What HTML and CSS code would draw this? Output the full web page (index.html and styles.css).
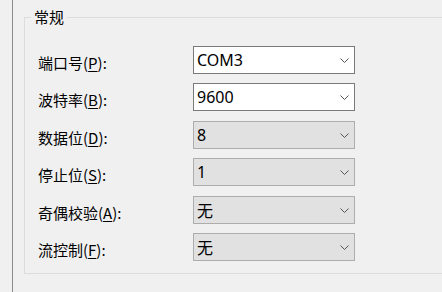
FILE: index.html
```html
<!DOCTYPE html>
<html lang="zh-CN">
<head>
    <meta charset="UTF-8">
    <title>串口设置</title>
    <link rel="stylesheet" href="styles.css">
</head>
<body>
    <div class="page">
        <fieldset class="group">
            <legend>常规</legend>
            <div class="rows">
                <label class="label">端口号(<u>P</u>):</label>
                <div class="combo edit"><span>COM3</span><svg class="arrow" width="9" height="5" viewBox="0 0 9 5"><polyline points="0.5,0.5 4.5,4.5 8.5,0.5"/></svg></div>

                <label class="label">波特率(<u>B</u>):</label>
                <div class="combo edit"><span>9600</span><svg class="arrow" width="9" height="5" viewBox="0 0 9 5"><polyline points="0.5,0.5 4.5,4.5 8.5,0.5"/></svg></div>

                <label class="label">数据位(<u>D</u>):</label>
                <div class="combo"><span>8</span><svg class="arrow" width="9" height="5" viewBox="0 0 9 5"><polyline points="0.5,0.5 4.5,4.5 8.5,0.5"/></svg></div>

                <label class="label">停止位(<u>S</u>):</label>
                <div class="combo"><span>1</span><svg class="arrow" width="9" height="5" viewBox="0 0 9 5"><polyline points="0.5,0.5 4.5,4.5 8.5,0.5"/></svg></div>

                <label class="label">奇偶校验(<u>A</u>):</label>
                <div class="combo"><span>无</span><svg class="arrow" width="9" height="5" viewBox="0 0 9 5"><polyline points="0.5,0.5 4.5,4.5 8.5,0.5"/></svg></div>

                <label class="label">流控制(<u>F</u>):</label>
                <div class="combo"><span>无</span><svg class="arrow" width="9" height="5" viewBox="0 0 9 5"><polyline points="0.5,0.5 4.5,4.5 8.5,0.5"/></svg></div>
            </div>
        </fieldset>
    </div>
</body>
</html>
```

FILE: styles.css
```css
html, body {
    margin: 0;
    height: 100%;
    overflow: hidden;
}
body {
    background: #f0f0f0;
    color: #000;
    font-family: "Noto Sans", "Noto Sans CJK SC", sans-serif;
    font-size: 15px;
}
.page {
    margin-left: 12px;
    height: 100%;
    border-left: 1px solid #8c8c8c;
    padding: 7px 0 0 11px;
    box-sizing: border-box;
}
.group {
    height: 267px;
    box-sizing: border-box;
    margin: 0;
    padding: 0;
    border: 1px solid #dcdcdc;
    border-right: none;
}
.group legend {
    margin-left: 6px;
    padding: 0 3px;
    line-height: 20px;
    font-family: "Noto Sans CJK SC", sans-serif;
}
.rows {
    display: grid;
    grid-template-columns: 155px 162px;
    grid-auto-rows: 28px;
    row-gap: 9.4px;
    padding: 19px 0 0 13px;
}
.label {
    font-family: "Noto Sans CJK SC", sans-serif;
    line-height: 28px;
    padding-top: 3px;
    white-space: nowrap;
}
.label u {
    text-underline-offset: 2px;
}
.combo {
    display: flex;
    align-items: center;
    justify-content: space-between;
    box-sizing: border-box;
    padding: 0 5px 0 3px;
    border: 1px solid #adadad;
    background: #e1e1e1;
    font-size: 16px;
}
.combo.edit {
    border-color: #7a7a7a;
    background: #fff;
}
.combo span {
    font-family: "Noto Sans", "Noto Sans CJK SC", sans-serif;
}
.arrow {
    fill: none;
    stroke: #555;
    stroke-width: 1;
    margin-top: 1px;
}
```
